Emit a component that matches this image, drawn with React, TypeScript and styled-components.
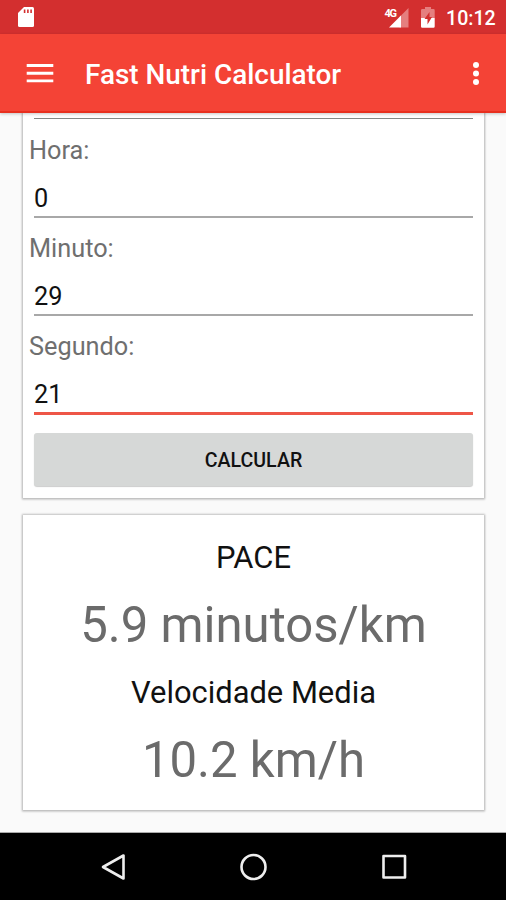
import React from "react";
import styled, { createGlobalStyle } from "styled-components";

const GlobalStyle = createGlobalStyle`
  * { box-sizing: border-box; }
  body { margin: 0; background: #fafafa; font-family: Roboto, sans-serif; }
`;

const Screen = styled.div`
  display: flex;
  flex-direction: column;
  width: 506px;
  height: 900px;
  overflow: hidden;
  background: #fafafa;
`;

const StatusBar = styled.header`
  display: flex;
  align-items: center;
  flex: 0 0 34px;
  height: 34px;
  padding: 0 10px 0 17px;
  background: #d32f2f;
  color: #fff;
`;

const StatusIcons = styled.div`
  display: flex;
  align-items: center;
  gap: 10px;
  margin-left: auto;
`;

const Clock = styled.time`
  width: 50px;
  padding-top: 3px;
  font-size: 19.6px;
  font-weight: 500;
  line-height: 30px;
  white-space: nowrap;
`;

const AppBar = styled.div`
  display: flex;
  align-items: center;
  flex: 0 0 79px;
  padding: 0 26px;
  background: #f44336;
  border-bottom: 2px solid #e8301f;
  color: #fff;
  z-index: 1;
  box-shadow: 0 1px 3px rgba(0, 0, 0, 0.22);
`;

const IconButton = styled.button`
  display: flex;
  padding: 0;
  border: 0;
  background: none;
  color: inherit;
`;

const Title = styled.h1`
  flex: 1;
  margin: 0 0 0 31px;
  padding-top: 5px;
  font-size: 27.9px;
  font-weight: 500;
  line-height: 40px;
  white-space: nowrap;
`;

const Content = styled.main`
  display: flex;
  flex-direction: column;
  gap: 17px;
  flex: 1;
  min-height: 0;
  padding: 0 22px 0 23px;
  border-bottom: 1px solid #aaa;
`;

const Card = styled.section`
  background: #fff;
  box-shadow: 0 0 2px 1px rgba(0, 0, 0, 0.2), 0 1px 2px 1px rgba(0, 0, 0, 0.1);
`;

const FormCard = styled(Card)`
  height: 385px;
  padding: 0 11px;
`;

const PreviousField = styled.div`
  height: 6px;
  border-bottom: 1px solid #848886;
`;

const Field = styled.label`
  display: flex;
  flex-direction: column;
  height: 98px;
  padding-top: 16px;
`;

const FieldLabel = styled.span`
  margin-left: -5px;
  color: #6f6f6f;
  font-size: 25.3px;
  line-height: 32px;
`;

const FieldInput = styled.input<{ $active?: boolean }>`
  display: block;
  width: 100%;
  height: ${(p) => (p.$active ? 52 : 51)}px;
  margin: 0 0 -2px;
  padding: 13px 0 0;
  border: 0;
  border-bottom: ${(p) => (p.$active ? "3px solid #ee5647" : "2px solid #a8a8a8")};
  border-radius: 0;
  outline: 0;
  background: none;
  color: #111;
  font: 25.3px/36px Roboto, sans-serif;
`;

const SubmitButton = styled.button`
  display: block;
  width: 100%;
  height: 53px;
  margin-top: 20px;
  padding: 3px 0 0;
  border: 0;
  border-radius: 3px;
  background: #d6d8d7;
  box-shadow: 0 1px 1px rgba(0, 0, 0, 0.2);
  color: #111;
  font: 500 19.6px/40px Roboto, sans-serif;
`;

const ResultCard = styled(Card)`
  display: flex;
  flex-direction: column;
  align-items: center;
  height: 295px;
  padding-top: 23px;
`;

const ResultLabel = styled.h2`
  margin: 0;
  color: #111;
  font-size: 30.9px;
  font-weight: 400;
  line-height: 40px;
  white-space: nowrap;
`;

const ResultValue = styled.p`
  margin: 17px 0 18px;
  color: #6b6b6b;
  font-size: 49.1px;
  line-height: 60px;
  white-space: nowrap;
`;

const NavBar = styled.nav`
  display: flex;
  align-items: center;
  justify-content: space-between;
  flex: 0 0 67px;
  padding: 0 98px 0 99px;
  background: #000;
  color: #eee;
`;

const fields = [
  { label: "Hora:", value: "0" },
  { label: "Minuto:", value: "29" },
  { label: "Segundo:", value: "21", active: true },
];

const results = [
  { label: "PACE", value: "5.9 minutos/km" },
  { label: "Velocidade Media", value: "10.2 km/h" },
];

const SdCardIcon = () => (
  <svg width="18" height="22" viewBox="0 0 18 22">
    <path d="M7 1h8.500a1.500 1.500 0 0 1 1.500 1.500v17a1.500 1.500 0 0 1-1.500 1.500h-13A1.500 1.500 0 0 1 1 19.500V7z" fill="#fff" />
    <path d="M7.600 3.500v3.500M10.900 3.500v3.500M14.100 3.500v3.500" stroke="#d32f2f" strokeWidth="1.600" />
  </svg>
);

const SignalIcon = () => (
  <svg width="27" height="24" viewBox="0 0 27 24">
    <path d="M25.500 3v19.500h-9V12z" fill="#e57f7f" />
    <path d="M18 10.500v12H6z" fill="#fff" />
    <text x="1.500" y="11.500" fill="#fff" fontFamily="Roboto, sans-serif" fontSize="11" fontWeight="700" textLength="12.500">4G</text>
  </svg>
);

const BatteryIcon = () => (
  <svg width="16" height="22" viewBox="0 0 16 22">
    <path d="M5 1h6v2h2.500a1.200 1.200 0 0 1 1.200 1.200V12H1V4.200A1.200 1.200 0 0 1 2.200 3H5z" fill="#e57f7f" />
    <path d="M1 12h13.700v8.500a1.200 1.200 0 0 1-1.200 1.200H2.200A1.200 1.200 0 0 1 1 20.500z" fill="#fff" />
    <path d="M9.500 6 4.500 13h3v5.500L12 11H9.500z" fill="#d32f2f" />
  </svg>
);

const MenuIcon = () => (
  <svg width="28" height="22" viewBox="0 0 28 22">
    <path d="M.7 3.500h26.600M.7 11.200h26.600M.7 18.900h26.600" stroke="#fff" strokeWidth="2.900" />
  </svg>
);

const MoreIcon = () => (
  <svg width="8" height="26" viewBox="0 0 8 26" fill="#fff">
    <circle cx="4" cy="5" r="3" />
    <circle cx="4" cy="13.500" r="3" />
    <circle cx="4" cy="22" r="3" />
  </svg>
);

const NavIcon = ({ children }: { children: React.ReactNode }) => (
  <svg width="28" height="28" viewBox="0 0 28 28" fill="none" stroke="currentColor" strokeWidth="2.600" strokeLinejoin="round">
    {children}
  </svg>
);

export default function App() {
  return (
    <>
      <GlobalStyle />
      <Screen>
        <StatusBar>
          <SdCardIcon />
          <StatusIcons>
            <SignalIcon />
            <BatteryIcon />
            <Clock>10:12</Clock>
          </StatusIcons>
        </StatusBar>
        <AppBar>
          <IconButton aria-label="Menu"><MenuIcon /></IconButton>
          <Title>Fast Nutri Calculator</Title>
          <IconButton aria-label="Mais"><MoreIcon /></IconButton>
        </AppBar>
        <Content>
          <FormCard>
            <PreviousField />
            {fields.map((f) => (
              <Field key={f.label}>
                <FieldLabel>{f.label}</FieldLabel>
                <FieldInput defaultValue={f.value} $active={f.active} />
              </Field>
            ))}
            <SubmitButton>CALCULAR</SubmitButton>
          </FormCard>
          <ResultCard>
            {results.map((r) => (
              <React.Fragment key={r.label}>
                <ResultLabel>{r.label}</ResultLabel>
                <ResultValue>{r.value}</ResultValue>
              </React.Fragment>
            ))}
          </ResultCard>
        </Content>
        <NavBar>
          <NavIcon><path d="M24.500 2.500v23L4 14z" /></NavIcon>
          <NavIcon><circle cx="13.500" cy="14" r="12" /></NavIcon>
          <NavIcon><rect x="3.500" y="3" width="21.500" height="21.500" /></NavIcon>
        </NavBar>
      </Screen>
    </>
  );
}
